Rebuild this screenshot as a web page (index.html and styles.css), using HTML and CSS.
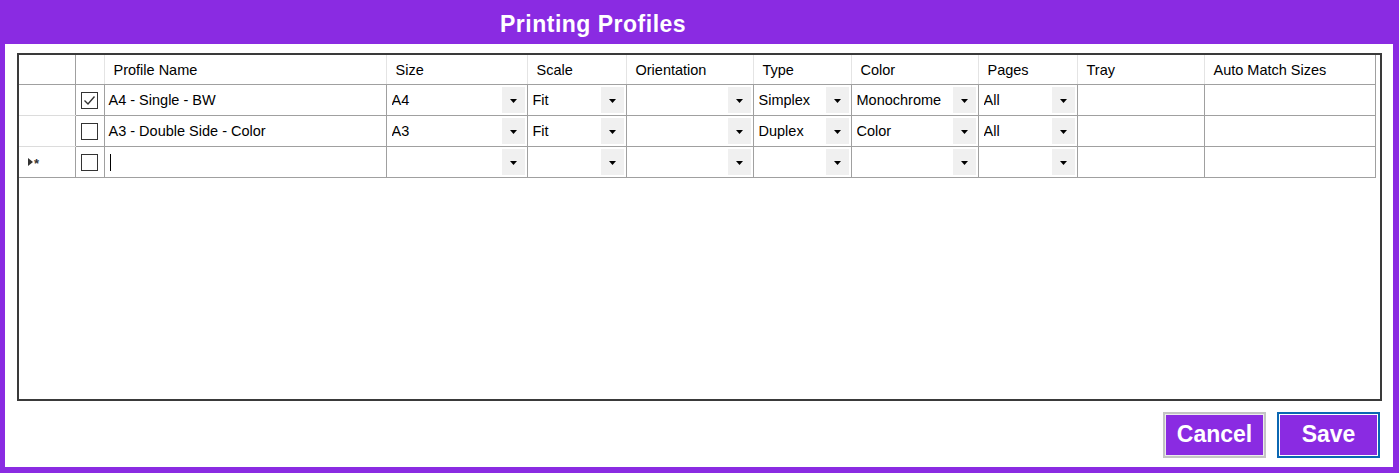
FILE: index.html
```html
<!DOCTYPE html>
<html>
<head>
<meta charset="utf-8">
<title>Printing Profiles</title>
<link rel="stylesheet" href="styles.css">
</head>
<body>
<div class="window">
  <div class="titlebar"><span class="title">Printing Profiles</span></div>
  <div class="content">
    <div class="grid">
      <table class="dgv">
        <colgroup>
          <col class="w-rh"><col class="w-cb"><col class="w-name"><col class="w-size"><col class="w-scale"><col class="w-orient"><col class="w-type"><col class="w-color"><col class="w-pages"><col class="w-tray"><col class="w-auto">
        </colgroup>
        <thead>
          <tr>
            <th class="rh"></th><th class="cb"></th>
            <th>Profile Name</th><th>Size</th><th>Scale</th><th>Orientation</th><th>Type</th><th>Color</th><th>Pages</th><th>Tray</th><th>Auto Match Sizes</th>
          </tr>
        </thead>
        <tbody>
          <tr>
            <td class="rh"></td>
            <td class="cb"><span class="chk"><svg width="15" height="15" viewBox="0 0 15 15"><polyline points="2.5,7.5 6,11 12.5,3.5" fill="none" stroke="#333" stroke-width="1.4"/></svg></span></td>
            <td class="txt">A4 - Single - BW</td>
            <td><div class="combo"><span class="val">A4</span><span class="drop"><svg width="7" height="4" viewBox="0 0 7 4"><polygon points="0,0 7,0 3.5,4" fill="#000"/></svg></span></div></td>
            <td><div class="combo"><span class="val">Fit</span><span class="drop"><svg width="7" height="4" viewBox="0 0 7 4"><polygon points="0,0 7,0 3.5,4" fill="#000"/></svg></span></div></td>
            <td><div class="combo"><span class="val"></span><span class="drop"><svg width="7" height="4" viewBox="0 0 7 4"><polygon points="0,0 7,0 3.5,4" fill="#000"/></svg></span></div></td>
            <td><div class="combo"><span class="val">Simplex</span><span class="drop"><svg width="7" height="4" viewBox="0 0 7 4"><polygon points="0,0 7,0 3.5,4" fill="#000"/></svg></span></div></td>
            <td><div class="combo"><span class="val">Monochrome</span><span class="drop"><svg width="7" height="4" viewBox="0 0 7 4"><polygon points="0,0 7,0 3.5,4" fill="#000"/></svg></span></div></td>
            <td><div class="combo"><span class="val">All</span><span class="drop"><svg width="7" height="4" viewBox="0 0 7 4"><polygon points="0,0 7,0 3.5,4" fill="#000"/></svg></span></div></td>
            <td></td><td></td>
          </tr>
          <tr>
            <td class="rh"></td>
            <td class="cb"><span class="chk"></span></td>
            <td class="txt">A3 - Double Side - Color</td>
            <td><div class="combo"><span class="val">A3</span><span class="drop"><svg width="7" height="4" viewBox="0 0 7 4"><polygon points="0,0 7,0 3.5,4" fill="#000"/></svg></span></div></td>
            <td><div class="combo"><span class="val">Fit</span><span class="drop"><svg width="7" height="4" viewBox="0 0 7 4"><polygon points="0,0 7,0 3.5,4" fill="#000"/></svg></span></div></td>
            <td><div class="combo"><span class="val"></span><span class="drop"><svg width="7" height="4" viewBox="0 0 7 4"><polygon points="0,0 7,0 3.5,4" fill="#000"/></svg></span></div></td>
            <td><div class="combo"><span class="val">Duplex</span><span class="drop"><svg width="7" height="4" viewBox="0 0 7 4"><polygon points="0,0 7,0 3.5,4" fill="#000"/></svg></span></div></td>
            <td><div class="combo"><span class="val">Color</span><span class="drop"><svg width="7" height="4" viewBox="0 0 7 4"><polygon points="0,0 7,0 3.5,4" fill="#000"/></svg></span></div></td>
            <td><div class="combo"><span class="val">All</span><span class="drop"><svg width="7" height="4" viewBox="0 0 7 4"><polygon points="0,0 7,0 3.5,4" fill="#000"/></svg></span></div></td>
            <td></td><td></td>
          </tr>
          <tr>
            <td class="rh newrow"><span class="indicator"><svg width="5" height="8" viewBox="0 0 5 8"><polygon points="0,0 5,4 0,8" fill="#333"/></svg><span class="star">*</span></span></td>
            <td class="cb"><span class="chk"></span></td>
            <td class="txt"><span class="caret"></span></td>
            <td><div class="combo plain"><span class="val"></span><span class="drop"><svg width="7" height="4" viewBox="0 0 7 4"><polygon points="0,0 7,0 3.5,4" fill="#000"/></svg></span></div></td>
            <td><div class="combo plain"><span class="val"></span><span class="drop"><svg width="7" height="4" viewBox="0 0 7 4"><polygon points="0,0 7,0 3.5,4" fill="#000"/></svg></span></div></td>
            <td><div class="combo plain"><span class="val"></span><span class="drop"><svg width="7" height="4" viewBox="0 0 7 4"><polygon points="0,0 7,0 3.5,4" fill="#000"/></svg></span></div></td>
            <td><div class="combo plain"><span class="val"></span><span class="drop"><svg width="7" height="4" viewBox="0 0 7 4"><polygon points="0,0 7,0 3.5,4" fill="#000"/></svg></span></div></td>
            <td><div class="combo plain"><span class="val"></span><span class="drop"><svg width="7" height="4" viewBox="0 0 7 4"><polygon points="0,0 7,0 3.5,4" fill="#000"/></svg></span></div></td>
            <td><div class="combo plain"><span class="val"></span><span class="drop"><svg width="7" height="4" viewBox="0 0 7 4"><polygon points="0,0 7,0 3.5,4" fill="#000"/></svg></span></div></td>
            <td></td><td></td>
          </tr>
        </tbody>
      </table>
    </div>
    <div class="actions">
      <button class="btn btn-cancel">Cancel</button>
      <button class="btn btn-save">Save</button>
    </div>
  </div>
</div>
</body>
</html>
```
FILE: styles.css
```css
html, body {
  margin: 0;
  padding: 0;
}
body {
  background: #8a2be2;
  width: 1399px;
  height: 473px;
  overflow: hidden;
  font-family: "Liberation Sans", Arial, sans-serif;
}
.window {
  width: 1399px;
  height: 473px;
  display: flex;
  flex-direction: column;
  box-sizing: border-box;
}
.titlebar {
  height: 44px;
  flex: none;
  display: flex;
  align-items: center;
  padding-left: 500px;
  padding-top: 4px;
  box-sizing: border-box;
}
.title {
  color: #fff;
  font-weight: bold;
  font-size: 23px;
  letter-spacing: 0.5px;
}
.content {
  flex: 1;
  background: #fff;
  margin: 0 6px 6px 5px;
  padding: 9px 11px 0 12px;
  display: flex;
  flex-direction: column;
}
.grid {
  height: 348px;
  border: 2px solid #3a3a3a;
  box-sizing: border-box;
  background: #fff;
}
.dgv {
  border-collapse: collapse;
  table-layout: fixed;
  width: 1356px;
  font-size: 14.5px;
  color: #000;
}
.w-rh { width: 56px; }
.w-cb { width: 29px; }
.w-name { width: 282px; }
.w-size { width: 141px; }
.w-scale { width: 99px; }
.w-orient { width: 127px; }
.w-type { width: 98px; }
.w-color { width: 127px; }
.w-pages { width: 99px; }
.w-tray { width: 127px; }
.w-auto { width: 171px; }

.dgv th {
  height: 29px;
  padding: 0 0 0 9px;
  text-align: left;
  font-weight: normal;
  border-right: 1px solid #e4e4e4;
  border-bottom: 1px solid #a0a0a0;
  white-space: nowrap;
  overflow: hidden;
}
.dgv th.rh {
  border-right: 1px solid #a0a0a0;
}
.dgv th:last-child {
  border-right: 1px solid #a0a0a0;
}
.dgv td {
  height: 30px;
  padding: 0;
  border: 1px solid #a0a0a0;
  white-space: nowrap;
  overflow: hidden;
  vertical-align: middle;
}
.dgv tr > *:first-child {
  border-left: none;
}
.dgv td.rh {
  border-bottom: 1px solid #dcdcdc;
}
.dgv tbody tr:last-child td.rh {
  border-bottom: 1px solid #a0a0a0;
}
.dgv td.txt {
  padding-left: 4px;
}
.dgv td.cb {
  text-align: center;
}
.chk {
  display: inline-block;
  width: 17px;
  height: 17px;
  border: 1px solid #333;
  box-sizing: border-box;
  vertical-align: middle;
  background: #fff;
  line-height: 0;
}
.chk svg {
  display: block;
}
.combo {
  display: flex;
  align-items: center;
  height: 30px;
  padding: 0 2px 0 5px;
}
.combo .val {
  flex: 1;
  overflow: hidden;
}
.combo .drop {
  width: 23px;
  height: 26px;
  background: #f0f0f0;
  display: flex;
  align-items: center;
  justify-content: center;
  flex: none;
}
.combo .drop svg {
  display: block;
  margin-top: 2px;
}
.dgv td.newrow {
  padding-left: 9px;
}
.indicator {
  display: flex;
  align-items: center;
  gap: 1px;
  color: #333;
}
.indicator .star {
  font-size: 13px;
  line-height: 1;
  font-weight: bold;
  margin-top: 3px;
}
.caret {
  display: inline-block;
  width: 1px;
  height: 17px;
  background: #000;
  vertical-align: middle;
  margin-left: 1px;
}
.actions {
  display: flex;
  justify-content: flex-end;
  gap: 11px;
  margin-top: 11px;
  padding-right: 2px;
}
.btn {
  width: 103px;
  height: 46px;
  background: #8a2be2;
  color: #fff;
  font-family: "Liberation Sans", Arial, sans-serif;
  font-weight: bold;
  font-size: 23px;
  box-sizing: border-box;
  padding: 0 0 2px 0;
  cursor: pointer;
}
.btn-cancel {
  border: 2px solid #c4c4c4;
  box-shadow: inset 0 0 0 1px #ececec;
}
.btn-save {
  border: 2px solid #0b67b2;
  box-shadow: inset 0 0 0 1px #fff;
}
```
